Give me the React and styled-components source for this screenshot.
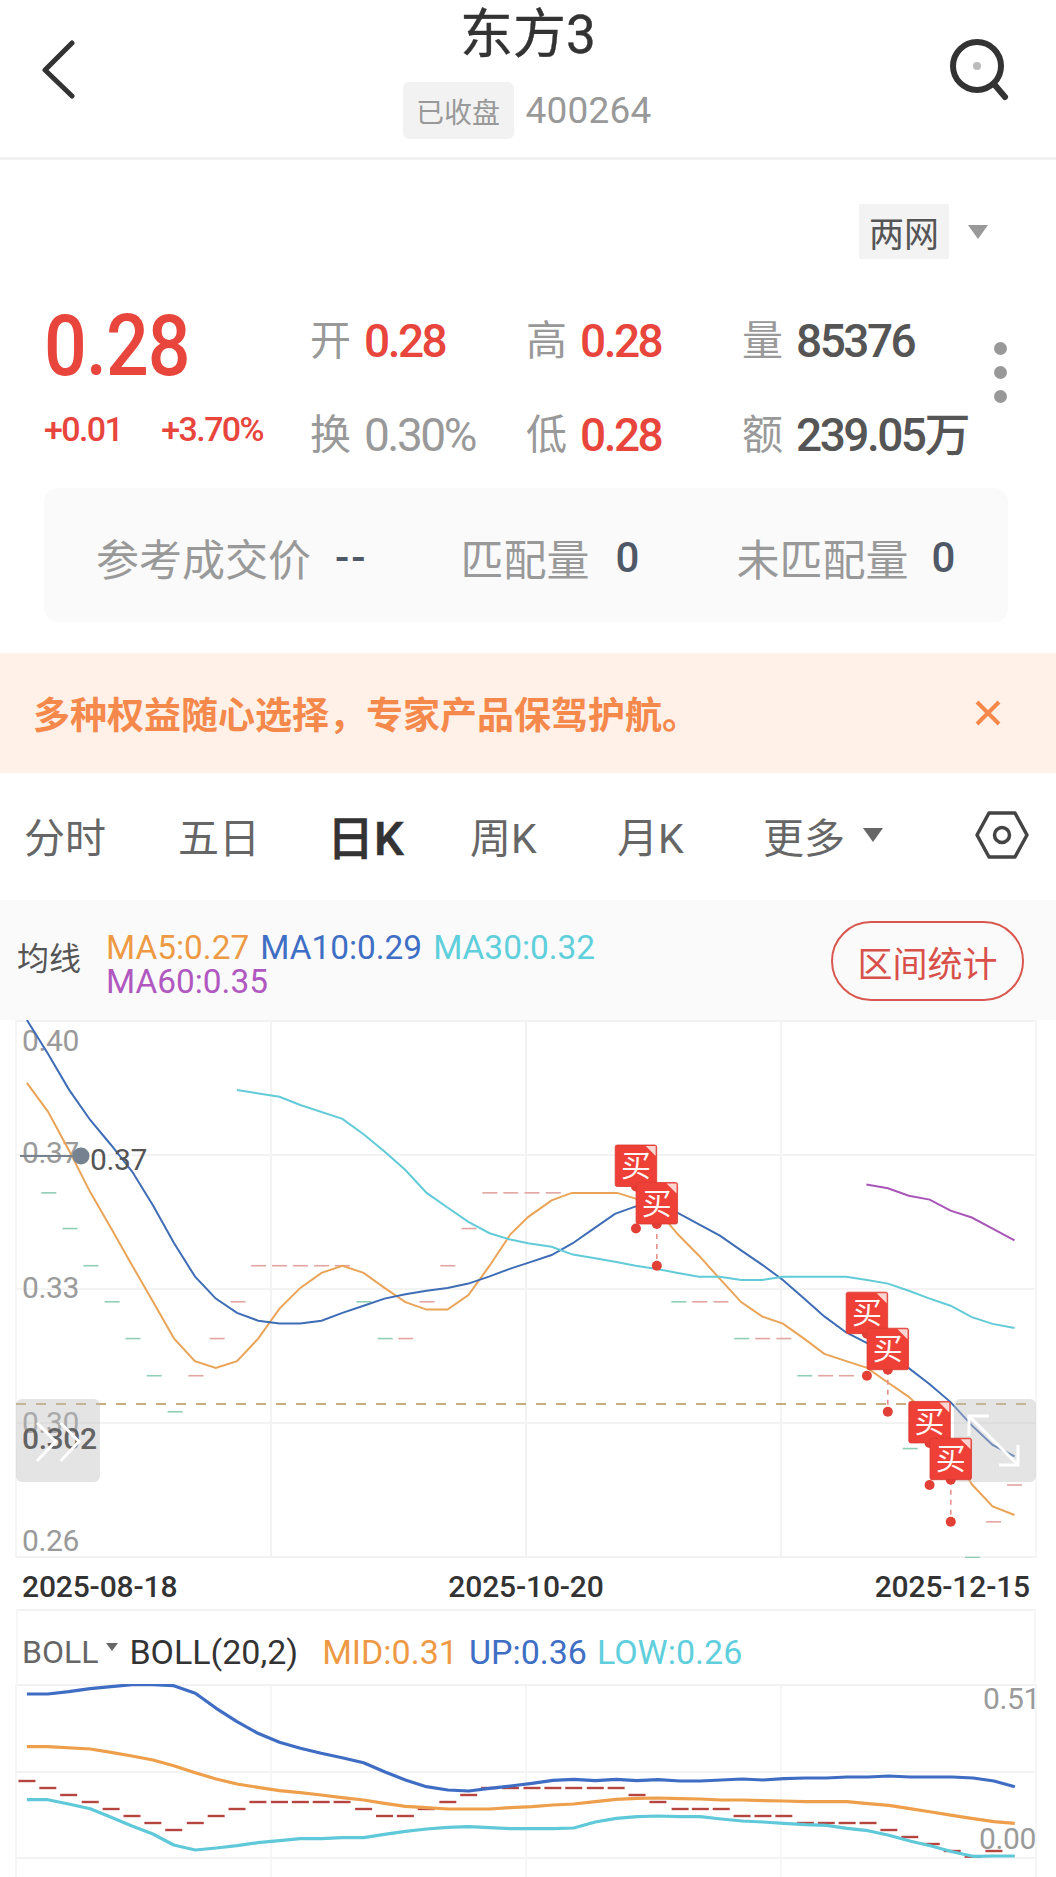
import React from "react";
import styled, { createGlobalStyle } from "styled-components";

const SANS = `Roboto, "Noto Sans CJK SC", "Noto Sans", sans-serif`;
const RED = "#e8453c";

const Global = createGlobalStyle`
  html, body { margin: 0; padding: 0; background: #fff; }
  * { box-sizing: border-box; }
  body { font-family: ${SANS}; }
`;

const Page = styled.div`
  width: 1056px; height: 1877px; overflow: hidden; background: #fff; display: flex; flex-direction: column;
`;
const Header = styled.header`
  height: 160px; flex: none; border-bottom: 3px solid #f2f2f2; display: grid; grid-template-columns: 136px 1fr 136px;
`;
const HeaderIcon = styled.div`
  display: flex; align-items: flex-start; padding-top: 39px; padding-left: ${p => p.$left}px;
`;
const TitleColumn = styled.div`
  display: flex; flex-direction: column; align-items: center;
`;
const Title = styled.h1`
  margin: 0; height: 82px; font-size: 53px; line-height: 71px; font-weight: 400; color: #333; -webkit-text-stroke: .4px #333;
`;
const TitleSub = styled.div`
  display: flex; align-items: center; gap: 12px; height: 57px; margin-left: -2px;
`;
const StatusTag = styled.span`
  width: 111px; height: 57px; border-radius: 6px; background: #f2f2f2; color: #999; font-size: 28px; display: flex; align-items: center; justify-content: center;
`;
const Code = styled.span`
  font-size: 37px; color: #999; letter-spacing: .2px;
`;
const MarketRow = styled.div`
  height: 99px; flex: none; display: flex; align-items: flex-end; justify-content: flex-end; padding-right: 68px; gap: 19px;
`;
const MarketTag = styled.span`
  width: 90px; height: 55px; background: #f3f3f3; border-radius: 2px; color: #555; font-size: 35px; display: flex; align-items: center; justify-content: center;
`;
const Caret = styled.span`
  width: 0; height: 0; border-left: ${p => p.$w / 2}px solid transparent; border-right: ${p => p.$w / 2}px solid transparent;
  border-top: ${p => p.$h}px solid ${p => p.$c || "#999"}; margin-bottom: ${p => p.$mb || 0}px; flex: none;
`;
const QuoteRow = styled.section`
  height: 230px; flex: none; display: flex; position: relative;
`;
const PriceBlock = styled.div`
  width: 310px; flex: none; padding-left: 44px; color: ${RED};
`;
const BigPrice = styled.div`
  font-weight: 500; font-size: 86px; line-height: 87px; margin-top: 43px; transform: scaleX(.875); transform-origin: left center; letter-spacing: -1px;
`;
const Changes = styled.div`
  display: flex; gap: 39px; font-size: 34px; font-weight: 500; line-height: 36px; letter-spacing: -1.6px; margin-top: 22px;
`;
const StatGrid = styled.div`
  display: grid; grid-template-columns: 216px 216px 1fr; grid-template-rows: 94px 48px; padding-top: 58px; width: 662px;
`;
const Stat = styled.div`
  display: flex; align-items: center; gap: 13px; height: 48px;
`;
const StatLabel = styled.span`
  font-size: 41px; color: #999; line-height: 48px;
`;
const StatValue = styled.span`
  font-size: 46px; line-height: 48px; letter-spacing: -2.5px; white-space: nowrap; font-weight: ${p => p.$w || 500}; color: ${p => p.$c};
`;
const MoreDots = styled.div`
  position: absolute; left: 994px; top: 83px; display: flex; flex-direction: column; gap: 11px;
`;
const Dot = styled.i`
  width: 13px; height: 13px; border-radius: 50%; background: #999; display: block;
`;
const AuctionBox = styled.section`
  margin: -1px 48px 0 44px; height: 134px; flex: none; background: #fafafa; border-radius: 14px; display: flex; align-items: center; position: relative; padding: 4px 0 0 52px;
`;
const AuctionLabel = styled.span`
  font-size: 43px; color: #999; margin-left: ${p => p.$ml || 0}px;
`;
const AuctionValue = styled.span`
  font-size: 42px; color: #4f5866; font-weight: 500; margin-left: ${p => p.$ml}px; letter-spacing: ${p => p.$ls || 0}px;
`;
const Banner = styled.section`
  margin-top: 31px; height: 120px; flex: none; background: #fff0e8; display: flex; align-items: center; justify-content: space-between; padding: 0 54px 0 33px;
`;
const BannerText = styled.span`
  font-size: 37px; font-weight: 700; color: #f5884b;
`;
const Tabs = styled.nav`
  height: 127px; flex: none; padding-bottom: 4px; display: grid; grid-template-columns: 154px 149px 143px 147px 146px 212px 1fr; align-items: center; padding-left: 24px;
`;
const Tab = styled.span`
  font-size: ${p => p.$active ? 47 : 41}px; font-weight: ${p => p.$active ? 500 : 400}; color: ${p => p.$active ? "#333" : "#666"}; display: flex; align-items: center; gap: 18px; -webkit-text-stroke: ${p => p.$active ? ".6px #333" : "0"};
`;
const MaBar = styled.section`
  height: 120px; flex: none; background: #fafafa; display: flex; align-items: center; padding: 0 32px 0 17px;
`;
const MaTitle = styled.span`
  font-size: 32px; color: #555; width: 89px; flex: none; margin-top: -8px;
`;
const MaValues = styled.div`
  flex: 1; display: flex; flex-wrap: wrap; column-gap: 11px; font-size: 33.4px; line-height: 34px; margin-top: 10px; max-width: 520px;
`;
const MaValue = styled.span`
  color: ${p => p.$c};
`;
const RangeButton = styled.button`
  margin-left: auto; width: 193px; height: 80px; border: 2px solid #d8574f; border-radius: 40px; background: transparent; color: #d8504a; font: 400 35px ${SANS}; padding: 0; margin-top: 2px;
`;
const ChartSvg = styled.svg`
  display: block; flex: none;
`;
const AxisText = styled.text`
  font-family: ${SANS}; font-size: ${p => p.$s || 30}px; fill: ${p => p.$c || "#9a9a9a"}; font-weight: ${p => p.$w || 400}; dominant-baseline: central; letter-spacing: -.4px;
`;
const BuyText = styled.text`
  font-family: ${SANS}; font-size: 30px; fill: #fff; text-anchor: middle; opacity: .95;
`;
const DateRow = styled.div`
  height: 51px; flex: none; display: flex; justify-content: space-between; align-items: center; padding: 6px 26px 0 22px; font-size: 30px; font-weight: 500; color: #333; letter-spacing: -.15px;
`;
const BollHead = styled.div`
  height: 75px; flex: none; margin: 0 20px 0 16px; border-top: 2px solid #f2f2f2; border-left: 2px solid #f7f7f7; border-right: 2px solid #f7f7f7; display: flex; align-items: center; font-size: 34px; padding: 8px 0 0 4px;
`;
const BollName = styled.span`
  color: #666; font-size: 32px; margin-right: 8px;
`;
const BollItem = styled.span`
  color: ${p => p.$c}; margin-left: ${p => p.$ml || 0}px;
`;

const L = a => a.map(([x, y]) => [x / 2.97, y / 2.8]);
const R = a => a.map(([x, y]) => [x / 2.97 + 528, y / 2.8]);
const toPts = a => a.map(p => p[0].toFixed(1) + "," + p[1].toFixed(1)).join(" ");

const ma5 = [...L([[80,176],[143,257],[205,365],[268,482],[330,583],[393,688],[455,790],[517,892],[579,955],[641,974],[704,955],[767,892],[830,808],[892,750],[955,708],[1017,688],[1080,708],[1142,750],[1204,790],[1267,811],[1329,811],[1391,770],[1454,688],[1516,600]]),
  ...R([[0,552],[70,505],[130,484],[265,484],[320,500],[383,530],[445,600],[508,660],[570,725],[633,790],[695,830],[757,850],[820,892],[880,935],[945,955],[1007,974],[1069,1015],[1131,1055],[1193,1110],[1255,1200],[1318,1300],[1380,1362],[1445,1386]])];
const ma10 = [...L([[80,0],[143,95],[205,195],[268,280],[330,350],[393,425],[455,520],[517,625],[579,718],[641,780],[704,820],[767,842],[830,850],[892,850],[955,842],[1017,820],[1080,800],[1142,780],[1204,768],[1267,758],[1329,750],[1391,738],[1454,718],[1516,696]]),
  ...R([[0,680],[70,658],[133,625],[195,584],[258,543],[320,522],[383,525],[445,540],[508,572],[570,604],[633,645],[695,685],[757,728],[820,780],[880,830],[945,875],[1007,905],[1069,940],[1131,975],[1193,1020],[1255,1070],[1318,1135],[1380,1190],[1445,1222]])];
const ma30 = [...L([[704,196],[830,215],[892,238],[1017,277],[1080,320],[1142,368],[1204,420],[1267,484],[1329,525],[1391,565],[1454,597],[1516,615]]),
  ...R([[0,625],[70,635],[133,657],[195,666],[258,677],[320,688],[383,697],[445,708],[508,719],[570,719],[633,728],[695,728],[757,719],[945,719],[1007,728],[1069,738],[1131,758],[1193,780],[1255,800],[1318,832],[1380,851],[1445,862]])];
const ma60 = R([[1005,461],[1069,471],[1131,492],[1193,503],[1255,534],[1318,553],[1380,584],[1445,617]]);

const green = "#8fcfb4", pink = "#e3a5a2";
const dashes = [
  ...L([[145,484],[208,584],[270,688],[333,789],[395,892],[458,996],[520,1097],[1081,789],[1144,892]]).map(p => [...p, green]),
  ...L([[82,380],[582,996],[645,892],[707,789],[768,688],[830,688],[892,688],[955,688],[1017,688],[1205,892],[1268,789],[1330,688],[1393,584],[1455,484],[1517,484]]).map(p => [...p, pink]),
  ...R([[12,484],[75,484]]).map(p => [...p, pink]),
  ...R([[448,789],[635,892],[822,996],[1135,1200],[1320,1505]]).map(p => [...p, green]),
  ...R([[510,789],[573,789],[697,892],[760,892],[884,996],[946,996],[1383,1405],[1445,1302]]).map(p => [...p, pink]),
];
const buys = [
  { x: 259, y: 350, low: 584 },
  { x: 321, y: 455, low: 688, line: true },
  { x: 945, y: 762, low: 996 },
  { x: 1007, y: 863, low: 1097, line: true },
  { x: 1131, y: 1068, low: 1302 },
  { x: 1194, y: 1171, low: 1405, line: true },
];

const grid = "#f3f3f3";
const MainChart = () => (
  <ChartSvg width="1056" height="538" viewBox="0 0 1056 538">
    {[1, 135, 269, 403, 537].map(y => <line key={y} x1="16" x2="1036" y1={y} y2={y} stroke={grid} strokeWidth="2" />)}
    {[16, 271, 526, 781, 1036].map(x => <line key={x} x1={x} x2={x} y1="0" y2="538" stroke={grid} strokeWidth={x === 16 || x === 1036 ? 1.5 : 2} />)}
    {dashes.map(([x, y, c], i) => <line key={i} x1={x - 7.5} x2={x + 7.5} y1={y} y2={y} stroke={c} strokeWidth="1.6" />)}
    <line x1="16" x2="1036" y1="384" y2="384" stroke="#c9ad7c" strokeWidth="1.8" strokeDasharray="10 10" />
    <AxisText x="22" y="20">0.40</AxisText>
    <AxisText x="22" y="132">0.37</AxisText>
    <AxisText x="22" y="267">0.33</AxisText>
    <AxisText x="22" y="402">0.30</AxisText>
    <AxisText x="22" y="520">0.26</AxisText>
    <polyline points={toPts(ma5)} fill="none" stroke="#e9a458" strokeWidth="2" />
    <polyline points={toPts(ma10)} fill="none" stroke="#3f6db5" strokeWidth="2" />
    <polyline points={toPts(ma30)} fill="none" stroke="#62cbd8" strokeWidth="2" />
    <polyline points={toPts(ma60)} fill="none" stroke="#a855b8" strokeWidth="2" />
    <line x1="20" x2="81" y1="136" y2="136" stroke="#76828f" strokeWidth="2" />
    <circle cx="81" cy="136" r="8.5" fill="#76828f" />
    <AxisText x="90" y="139" $c="#555">0.37</AxisText>
    <AxisText x="22" y="418" $c="#222" $w="500">0.302</AxisText>
    <rect x="16" y="379" width="84" height="83" rx="6" fill="rgba(190,190,190,.42)" />
    <path d="M37 403 L55.5 421.5 L37 441 M60.6 403 L79 421.5 L60.6 441" fill="none" stroke="#fff" strokeWidth="3" />
    <rect x="954" y="379" width="82" height="83" rx="6" fill="rgba(190,190,190,.42)" />
    <path d="M969 416 V396 H989 M969 396 L1018 445 M1018 425 V445 H999" fill="none" stroke="#fff" strokeWidth="3" />
    {buys.map((b, i) => {
      const x = b.x / 2.97 + 528, y = b.y / 2.8, w = 41.5, h = 41.5, cx = x + w / 2, low = b.low / 2.8;
      return (
        <g key={i}>
          {b.line && <line x1={cx} x2={cx} y1={y + h} y2={low} stroke="#e58f8b" strokeWidth="1.6" strokeDasharray="5 5" />}
          <circle cx={cx} cy={low} r="5" fill="#e23f36" />
          <circle cx={cx} cy={y + h} r="5" fill="#e23f36" />
          <rect x={x} y={y} width={w} height={h} rx="2" fill="#ee4036" stroke="#d93a31" strokeWidth=".8" />
          <polygon points={`${x + w - 11},${y + 1} ${x + w - 1},${y + 1} ${x + w - 1},${y + 11}`} fill="#fbd5d2" />
          <BuyText x={cx} y={y + 31}>买</BuyText>
        </g>
      );
    })}
  </ChartSvg>
);

const Z = a => a.map(([x, y]) => [x / 1.485, y / 3 - 104]);
const bBlue = Z([[40,342],[71,342],[102,335],[134,326],[165,320],[196,314],[227,314],[258,317],[290,340],[321,385],[352,425],[383,460],[415,487],[446,505],[477,520],[508,533],[540,548],[571,575],[602,600],[633,620],[665,630],[696,633],[727,625],[758,618],[790,610],[821,601],[852,598],[884,602],[915,598],[946,602],[977,599],[1010,603],[1040,603],[1071,600],[1102,597],[1133,600],[1164,596],[1196,594],[1227,594],[1258,591],[1289,591],[1320,588],[1351,591],[1383,591],[1414,591],[1445,594],[1476,603],[1507,620]]);
const bOrange = Z([[40,500],[71,500],[134,507],[165,517],[196,528],[227,540],[258,557],[290,578],[321,597],[352,612],[383,622],[415,632],[446,638],[477,645],[508,653],[540,660],[571,670],[602,679],[633,683],[665,687],[696,687],[727,687],[758,683],[790,680],[821,675],[852,672],[884,665],[915,658],[946,655],[977,654],[1010,656],[1040,657],[1071,660],[1102,660],[1133,662],[1164,663],[1196,665],[1227,665],[1258,665],[1289,671],[1320,676],[1351,686],[1383,696],[1414,706],[1445,716],[1476,725],[1507,730]]);
const bCyan = Z([[40,659],[71,659],[102,672],[134,686],[165,712],[196,738],[227,762],[258,795],[290,810],[321,804],[352,797],[383,788],[415,782],[446,776],[477,776],[508,773],[540,773],[571,763],[602,754],[633,747],[665,742],[696,740],[727,743],[758,746],[790,746],[821,746],[852,744],[884,726],[915,715],[946,710],[977,708],[1010,710],[1040,710],[1071,717],[1102,723],[1133,726],[1164,730],[1196,734],[1227,736],[1258,745],[1289,752],[1320,766],[1351,783],[1383,798],[1414,815],[1445,829],[1476,828],[1507,828]]);
const bDashes = Z([[40,603],[71,624],[102,645],[134,666],[165,687],[196,708],[227,729],[258,750],[290,729],[321,708],[352,687],[383,666],[415,666],[446,666],[477,666],[508,666],[540,687],[571,708],[602,708],[633,687],[665,666],[696,645],[727,624],[758,624],[790,624],[821,624],[852,624],[884,624],[915,624],[946,645],[977,666],[1010,687],[1040,687],[1071,687],[1102,708],[1133,708],[1164,708],[1196,729],[1227,729],[1258,729],[1289,729],[1320,750],[1351,771],[1383,792],[1414,813],[1445,830],[1476,813]]);

const BollChart = () => (
  <ChartSvg width="1056" height="193" viewBox="0 0 1056 193">
    {[0, 87, 173].map(y => <line key={y} x1="16" x2="1036" y1={y + 1} y2={y + 1} stroke={grid} strokeWidth="2" />)}
    {[16, 271, 526, 781, 1036].map(x => <line key={x} x1={x} x2={x} y1="0" y2="193" stroke={grid} strokeWidth="1.5" />)}
    {bDashes.map(([x, y], i) => <line key={i} x1={x - 8.5} x2={x + 8.5} y1={y} y2={y} stroke="#b5453f" strokeWidth="2.4" />)}
    <polyline points={toPts(bOrange)} fill="none" stroke="#ee9f4c" strokeWidth="3.2" strokeLinejoin="round" />
    <polyline points={toPts(bBlue)} fill="none" stroke="#3f6dc4" strokeWidth="3.2" strokeLinejoin="round" />
    <polyline points={toPts(bCyan)} fill="none" stroke="#5fc9d9" strokeWidth="3.2" strokeLinejoin="round" />
    <AxisText x="983" y="14">0.51</AxisText>
    <AxisText x="979" y="154">0.00</AxisText>
  </ChartSvg>
);

const App = () => (
  <Page>
    <Global />
    <Header>
      <HeaderIcon $left={38}>
        <svg width="40" height="60" viewBox="0 0 40 60"><path d="M34 4 L7 31 L34 57" fill="none" stroke="#333" strokeWidth="5" strokeLinecap="round" strokeLinejoin="round" /></svg>
      </HeaderIcon>
      <TitleColumn>
        <Title>东方3</Title>
        <TitleSub><StatusTag>已收盘</StatusTag><Code>400264</Code></TitleSub>
      </TitleColumn>
      <HeaderIcon $left={29}>
        <svg width="64" height="64" viewBox="0 0 64 64"><circle cx="28" cy="27" r="24" fill="none" stroke="#333" strokeWidth="6" /><circle cx="28" cy="27" r="4" fill="#bbb" /><path d="M45 45 L56 58" fill="none" stroke="#333" strokeWidth="6" strokeLinecap="round" /></svg>
      </HeaderIcon>
    </Header>
    <MarketRow>
      <MarketTag>两网</MarketTag>
      <Caret $w={21} $h={14} $mb={20} />
    </MarketRow>
    <QuoteRow>
      <PriceBlock>
        <BigPrice>0.28</BigPrice>
        <Changes><span>+0.01</span><span>+3.70%</span></Changes>
      </PriceBlock>
      <StatGrid>
        <Stat><StatLabel>开</StatLabel><StatValue $c={RED}>0.28</StatValue></Stat>
        <Stat><StatLabel>高</StatLabel><StatValue $c={RED}>0.28</StatValue></Stat>
        <Stat><StatLabel>量</StatLabel><StatValue $c="#555">85376</StatValue></Stat>
        <Stat><StatLabel>换</StatLabel><StatValue $c="#999" $w={400}>0.30%</StatValue></Stat>
        <Stat><StatLabel>低</StatLabel><StatValue $c={RED}>0.28</StatValue></Stat>
        <Stat><StatLabel>额</StatLabel><StatValue $c="#555">239.05万</StatValue></Stat>
      </StatGrid>
      <MoreDots><Dot /><Dot /><Dot /></MoreDots>
    </QuoteRow>
    <AuctionBox>
      <AuctionLabel>参考成交价</AuctionLabel>
      <AuctionValue $ml={24} $ls={2}>--</AuctionValue>
      <AuctionLabel $ml={93}>匹配量</AuctionLabel>
      <AuctionValue $ml={26}>0</AuctionValue>
      <AuctionLabel $ml={97}>未匹配量</AuctionLabel>
      <AuctionValue $ml={23}>0</AuctionValue>
    </AuctionBox>
    <Banner>
      <BannerText>多种权益随心选择，专家产品保驾护航。</BannerText>
      <svg width="28" height="28" viewBox="0 0 28 28"><path d="M3 3 L25 25 M25 3 L3 25" stroke="#f5884b" strokeWidth="4" /></svg>
    </Banner>
    <Tabs>
      <Tab>分时</Tab>
      <Tab>五日</Tab>
      <Tab $active>日K</Tab>
      <Tab>周K</Tab>
      <Tab>月K</Tab>
      <Tab>更多<Caret $w={21} $h={14} $c="#666" /></Tab>
      <svg width="54" height="50" viewBox="0 0 54 50"><path d="M14 3 H40 L52 25 L40 47 H14 L2 25 Z" fill="none" stroke="#444" strokeWidth="3.5" strokeLinejoin="round" /><circle cx="27" cy="25" r="7.5" fill="none" stroke="#444" strokeWidth="3.5" /></svg>
    </Tabs>
    <MaBar>
      <MaTitle>均线</MaTitle>
      <MaValues>
        <MaValue $c="#ee9a45">MA5:0.27</MaValue>
        <MaValue $c="#3f6fc4">MA10:0.29</MaValue>
        <MaValue $c="#5fcfdc">MA30:0.32</MaValue>
        <MaValue $c="#b058c0">MA60:0.35</MaValue>
      </MaValues>
      <RangeButton>区间统计</RangeButton>
    </MaBar>
    <MainChart />
    <DateRow><span>2025-08-18</span><span>2025-10-20</span><span>2025-12-15</span></DateRow>
    <BollHead>
      <BollName>BOLL</BollName>
      <Caret $w={13} $h={8} $c="#666" $mb={10} />
      <BollItem $c="#333" $ml={11}>BOLL(20,2)</BollItem>
      <BollItem $c="#ee9a45" $ml={24}>MID:0.31</BollItem>
      <BollItem $c="#3f6fc4" $ml={11}>UP:0.36</BollItem>
      <BollItem $c="#5fcfdc" $ml={10}>LOW:0.26</BollItem>
    </BollHead>
    <BollChart />
  </Page>
);

export default App;
